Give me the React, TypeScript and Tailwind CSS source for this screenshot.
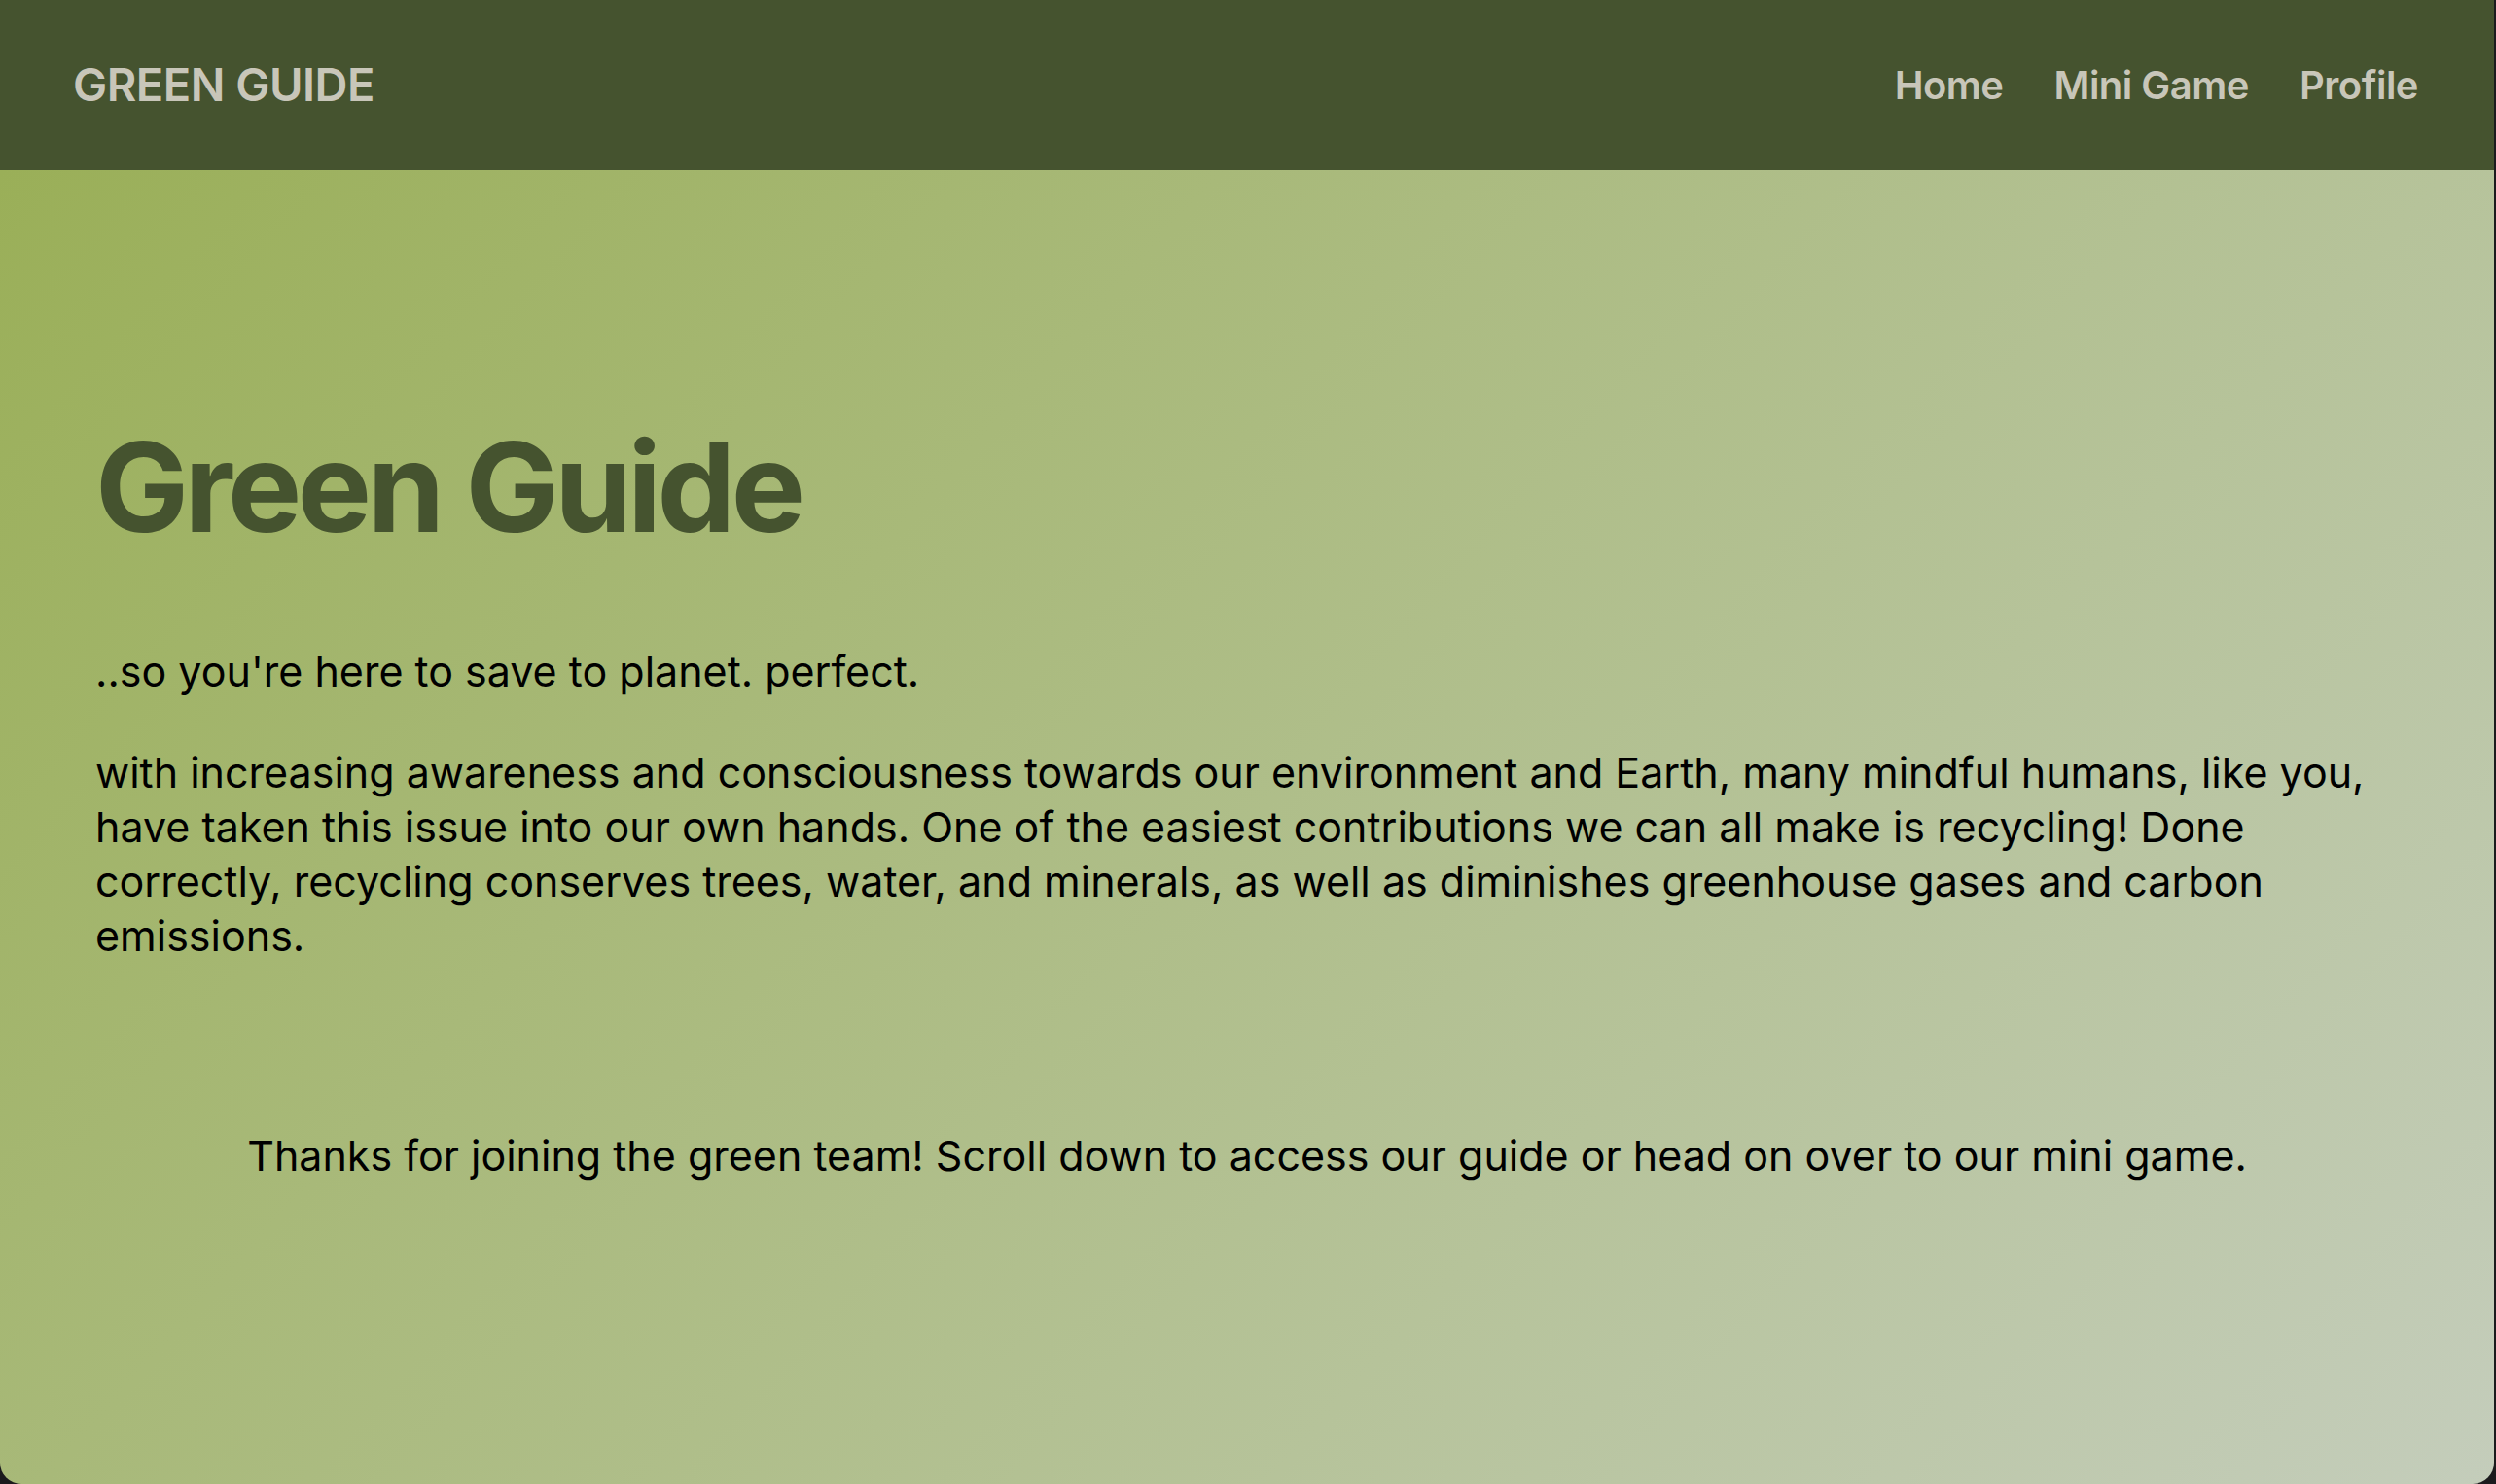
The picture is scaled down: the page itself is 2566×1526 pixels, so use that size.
const navLinks = ["Home", "Mini Game", "Profile"];

export default function App() {
  return (
    <div className="min-h-screen bg-[#1b1b1d] font-['Inter',sans-serif]">
      <div className="flex h-[1526px] w-[2564px] flex-col overflow-hidden rounded-b-[22px]">
        <header className="flex h-[175px] shrink-0 items-center justify-between bg-[#45532f] pl-[75px] pr-[78px]">
          <a href="#" className="text-[47px] font-semibold tracking-[-0.5px] text-[#c8c6b9]">
            GREEN GUIDE
          </a>
          <nav className="flex items-center gap-[52px]">
            {navLinks.map((link) => (
              <a key={link} href="#" className="text-[40px] font-semibold tracking-[-0.5px] text-[#c8c6b9]">
                {link}
              </a>
            ))}
          </nav>
        </header>

        <main className="flex-1 bg-[linear-gradient(132deg,#9aaf58,#c4cdbb)] px-[98px] pt-[262px]">
          <h1 className="text-[128px] font-bold leading-none tracking-[-4.5px] text-[#45532f]">Green Guide</h1>

          <p className="mt-[97px] text-[43px] leading-[56px] text-black">
            ..so you&apos;re here to save to planet. perfect.
          </p>
          <p className="mt-[48px] text-[43px] leading-[56px] text-black">
            with increasing awareness and consciousness towards our environment and Earth, many mindful humans, like
            you, have taken this issue into our own hands. One of the easiest contributions we can all make is
            recycling! Done correctly, recycling conserves trees, water, and minerals, as well as diminishes greenhouse
            gases and carbon emissions.
          </p>

          <p className="mt-[170px] text-center text-[43px] leading-[56px] text-black">
            Thanks for joining the green team! Scroll down to access our guide or head on over to our mini game.
          </p>
        </main>
      </div>
    </div>
  );
}
